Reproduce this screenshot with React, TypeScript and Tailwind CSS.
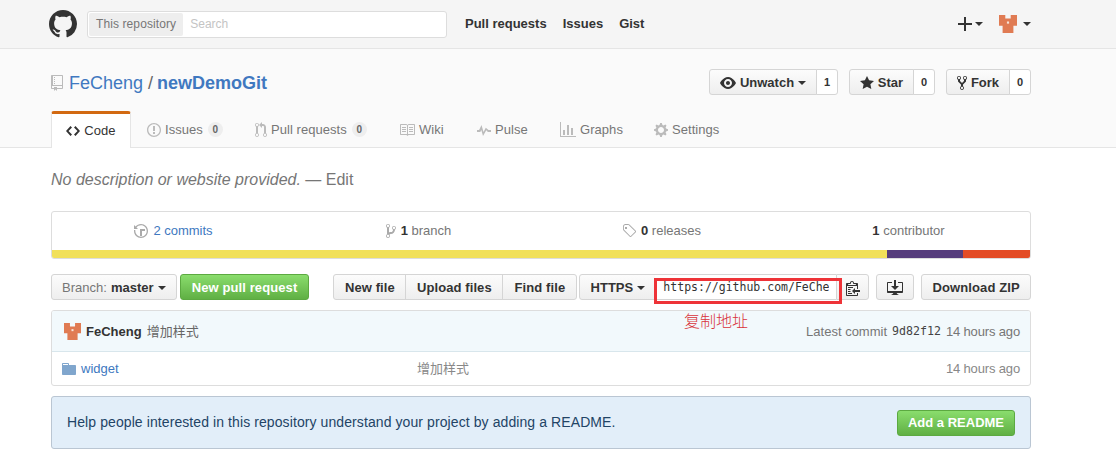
import type { ReactNode } from 'react';

const caret = 'inline-block w-0 h-0 border-x-[4px] border-x-transparent border-t-[4px] border-t-current';
const btn =
  'flex items-center justify-center h-[26px] pt-[1px] border border-[#d5d5d5] bg-gradient-to-b from-[#fcfcfc] to-[#eeeeee] text-[13px] font-bold text-[#333333]';
const green =
  'flex items-center justify-center h-[26px] pt-[1px] rounded-[3px] border border-[#5ca941] bg-gradient-to-b from-[#8add6d] to-[#60b044] text-[13px] font-bold text-white';

const icons = {
  mark: 'M8 0C3.58 0 0 3.58 0 8c0 3.54 2.29 6.53 5.47 7.59.4.07.55-.17.55-.38 0-.19-.01-.82-.01-1.49-2.01.37-2.53-.49-2.69-.94-.09-.23-.48-.94-.82-1.13-.28-.15-.68-.52-.01-.53.63-.01 1.08.58 1.23.82.72 1.21 1.87.87 2.33.66.07-.52.28-.87.51-1.07-1.78-.2-3.64-.89-3.64-3.95 0-.87.31-1.59.82-2.15-.08-.2-.36-1.02.08-2.12 0 0 .67-.21 2.2.82.64-.18 1.32-.27 2-.27.68 0 1.36.09 2 .27 1.53-1.04 2.2-.82 2.2-.82.44 1.1.16 1.92.08 2.12.51.56.82 1.27.82 2.15 0 3.07-1.87 3.75-3.65 3.95.29.25.54.73.54 1.48 0 1.07-.01 1.93-.01 2.2 0 .21.15.46.55.38A8.013 8.013 0 0016 8c0-4.42-3.58-8-8-8z',
  repo: 'M4 9H3V8h1v1zm0-3H3v1h1V6zm0-2H3v1h1V4zm0-2H3v1h1V2zm8-1v12c0 .55-.45 1-1 1H6v2l-1.5-1.5L3 16v-2H1c-.55 0-1-.45-1-1V1c0-.55.45-1 1-1h10c.55 0 1 .45 1 1zm-1 10H1v2h2v-1h3v1h5v-2zm0-10H2v9h9V1z',
  eye: 'M8.06 2C3 2 0 8 0 8s3 6 8.06 6C13 14 16 8 16 8s-3-6-7.94-6zM8 12c-2.2 0-4-1.78-4-4 0-2.2 1.8-4 4-4 2.22 0 4 1.8 4 4 0 2.22-1.78 4-4 4zm2-4c0 1.11-.89 2-2 2-1.11 0-2-.89-2-2 0-1.11.89-2 2-2 1.11 0 2 .89 2 2z',
  star: 'M14 6l-4.9-.64L7 1 4.9 5.36 0 6l3.6 3.26L2.67 14 7 11.67 11.33 14l-.93-4.74L14 6z',
  fork: 'M8 1a1.993 1.993 0 00-1 3.72V6L5 8 3 6V4.72A1.993 1.993 0 002 1a1.993 1.993 0 00-1 3.72V6.5l3 3v1.78A1.993 1.993 0 005 15a1.993 1.993 0 001-3.72V9.5l3-3V4.72A1.993 1.993 0 008 1zM2 4.2C1.34 4.2.8 3.65.8 3c0-.65.55-1.2 1.2-1.2.65 0 1.2.55 1.2 1.2 0 .65-.55 1.2-1.2 1.2zm3 10c-.66 0-1.2-.55-1.2-1.2 0-.65.55-1.2 1.2-1.2.65 0 1.2.55 1.2 1.2 0 .65-.55 1.2-1.2 1.2zm3-10c-.66 0-1.2-.55-1.2-1.2 0-.65.55-1.2 1.2-1.2.65 0 1.2.55 1.2 1.2 0 .65-.55 1.2-1.2 1.2z',
  code: 'M9.5 3L8 4.5 11.5 8 8 11.5 9.5 13 14 8 9.5 3zm-5 0L0 8l4.5 5L6 11.5 2.5 8 6 4.5 4.5 3z',
  issue: 'M7 2.3c3.14 0 5.7 2.56 5.7 5.7s-2.56 5.7-5.7 5.7A5.71 5.71 0 011.3 8c0-3.14 2.56-5.7 5.7-5.7zM7 1C3.14 1 0 4.14 0 8s3.14 7 7 7 7-3.14 7-7-3.14-7-7-7zm1 3H6v5h2V4zm0 6H6v2h2v-2z',
  pull: 'M11 11.28V5c-.03-.78-.34-1.47-.94-2.06C9.46 2.35 8.78 2.03 8 2H7V0L4 3l3 3V4h1c.27.02.48.11.69.31.21.2.3.42.31.69v6.28A1.993 1.993 0 0010 15a1.993 1.993 0 001-3.72zm-1 2.92c-.66 0-1.2-.55-1.2-1.2 0-.65.55-1.2 1.2-1.2.65 0 1.2.55 1.2 1.2 0 .65-.55 1.2-1.2 1.2zM4 3c0-1.11-.89-2-2-2a1.993 1.993 0 00-.99 3.72v6.56A1.993 1.993 0 002 15a1.993 1.993 0 00.99-3.72V4.72c.59-.34 1-.98 1-1.72zm-.8 10c0 .66-.55 1.2-1.2 1.2-.65 0-1.2-.55-1.2-1.2 0-.65.55-1.2 1.2-1.2.65 0 1.2.55 1.2 1.2zM2 4.2C1.34 4.2.8 3.65.8 3c0-.65.55-1.2 1.2-1.2.65 0 1.2.55 1.2 1.2 0 .65-.55 1.2-1.2 1.2z',
  book: 'M3 5h4v1H3V5zm0 3h4V7H3v1zm0 2h4V9H3v1zm11-5h-4v1h4V5zm0 2h-4v1h4V7zm0 2h-4v1h4V9zm2-6v9c0 .55-.45 1-1 1H9.5l-1 1-1-1H2c-.55 0-1-.45-1-1V3c0-.55.45-1 1-1h5.5l1 1 1-1H15c.55 0 1 .45 1 1zm-8 .5L7.5 3H2v9h6V3.5zm7-.5H9.5l-.5.5V12h6V3z',
  pulse: 'M11.5 8L8.8 5.8 6.5 10 4.5 3 2.1 8H0v2h3.3l1-1.9L6 14l3.3-5.7 1.6 1.7H14V8h-2.5z',
  graph: 'M16 14v1H0V0h1v14h15zM5 13H3V8h2v5zm4 0H7V3h2v10zm4 0h-2V6h2v7z',
  gear: 'M14 8.77v-1.6l-1.94-.64-.45-1.09.88-1.84-1.13-1.13-1.81.91-1.09-.45-.69-1.92h-1.6l-.63 1.94-1.11.45-1.84-.88-1.13 1.13.91 1.81-.45 1.09L0 7.23v1.59l1.94.64.45 1.09-.88 1.84 1.13 1.13 1.81-.91 1.09.45.69 1.92h1.59l.63-1.94 1.11-.45 1.84.88 1.13-1.13-.92-1.81.47-1.09L14 8.75v.02zM7 11c-1.66 0-3-1.34-3-3s1.34-3 3-3 3 1.34 3 3-1.34 3-3 3z',
  history: 'M8 13H6V6h5v2H8v5zM7 1C4.81 1 2.87 2.02 1.59 3.59L0 2v4h4L2.5 4.5C3.55 3.17 5.17 2.3 7 2.3c3.14 0 5.7 2.56 5.7 5.7s-2.56 5.7-5.7 5.7A5.71 5.71 0 011.3 8c0-.34.03-.67.09-1H.08C.03 7.33 0 7.66 0 8c0 3.86 3.14 7 7 7s7-3.14 7-7-3.14-7-7-7z',
  branch: 'M10 5c0-1.11-.89-2-2-2a1.993 1.993 0 00-1 3.72v.3c-.02.52-.23.98-.63 1.38-.4.4-.86.61-1.38.63-.83.02-1.48.16-2 .45V4.72a1.993 1.993 0 00-1-3.72C.88 1 0 1.89 0 3a2 2 0 001 1.72v6.56c-.59.35-1 .99-1 1.72 0 1.11.89 2 2 2 1.11 0 2-.89 2-2 0-.53-.2-1-.53-1.36.09-.06.48-.41.59-.47.25-.11.56-.17.94-.17 1.05-.05 1.95-.45 2.75-1.25S8.95 7.77 9 6.73h-.02C9.59 6.37 10 5.73 10 5zM2 1.8c.66 0 1.2.55 1.2 1.2 0 .65-.55 1.2-1.2 1.2C1.35 4.2.8 3.65.8 3c0-.65.55-1.2 1.2-1.2zm0 12.41c-.66 0-1.2-.55-1.2-1.2 0-.65.55-1.2 1.2-1.2.65 0 1.2.55 1.2 1.2 0 .65-.55 1.2-1.2 1.2zm6-8c-.66 0-1.2-.55-1.2-1.2 0-.65.55-1.2 1.2-1.2.65 0 1.2.55 1.2 1.2 0 .65-.55 1.2-1.2 1.2z',
  tag: 'M7.73 1.73C7.26 1.26 6.62 1 5.96 1H3.5C2.13 1 1 2.13 1 3.5v2.47c0 .66.27 1.3.73 1.77l6.06 6.06c.39.39 1.02.39 1.41 0l4.59-4.59a.996.996 0 000-1.41L7.73 1.73zM2.38 7.09c-.31-.3-.47-.7-.47-1.13V3.5c0-.88.72-1.59 1.59-1.59h2.47c.42 0 .83.16 1.13.47l6.14 6.13-4.73 4.73-6.13-6.15zM3 4h2v2H3V4z',
  clippy: 'M2 13h4v1H2v-1zm5-6H2v1h5V7zm2 3V8l-3 3 3 3v-2h5v-2H9zM4.5 9H2v1h2.5V9zM2 12h2.5v-1H2v1zm9 1h1v2c-.02.28-.11.52-.3.7-.19.18-.42.28-.7.3H1c-.55 0-1-.45-1-1V4c0-.55.45-1 1-1h3c0-1.11.89-2 2-2 1.11 0 2 .89 2 2h3c.55 0 1 .45 1 1v5h-1V6H1v9h10v-2zM2 5h8c0-.55-.45-1-1-1H8c-.55 0-1-.45-1-1s-.45-1-1-1-1 .45-1 1-.45 1-1 1H3c-.55 0-1 .45-1 1z',
  download: 'M4 6h3V0h2v6h3l-4 4-4-4zm11-4h-4v1h4v8H1V3h4V2H1c-.55 0-1 .45-1 1v9c0 .55.45 1 1 1h5.34c-.25.61-.86 1.39-2.34 2h8c-1.48-.61-2.09-1.39-2.34-2H15c.55 0 1-.45 1-1V3c0-.55-.45-1-1-1z',
  folder: 'M13 4H7V3c0-.66-.31-1-1-1H1c-.55 0-1 .45-1 1v10c0 .55.45 1 1 1h12c.55 0 1-.45 1-1V5c0-.55-.45-1-1-1zM6 4H1V3h5v1z',
};

function Oct({ d, w = 16, size = 16, className = '' }: { d: string; w?: number; size?: number; className?: string }) {
  return (
    <svg width={(w * size) / 16} height={size} viewBox={`0 0 ${w} 16`} fill="currentColor" className={`shrink-0 ${className}`}>
      <path d={d} />
    </svg>
  );
}

function Identicon({ size }: { size: number }) {
  return (
    <svg width={size} height={size} viewBox="0 0 5 5" className="shrink-0">
      <path d="M0 0h1.75v1h1.5V0H5v3H4v2H1V3H0z" fill="#e07b53" />
      <rect x="2.2" y="1.8" width="0.6" height="0.6" fill="#f7e3d8" />
    </svg>
  );
}

function Social({ widthClass, count, children }: { widthClass: string; count: string; children: ReactNode }) {
  return (
    <div className="flex">
      <div className={`${btn} ${widthClass} rounded-l-[3px] gap-[4px]`}>{children}</div>
      <div className="flex items-center justify-center w-[22px] h-[26px] -ml-px bg-white border border-[#d5d5d5] rounded-r-[3px] text-[11px] font-bold text-[#333333]">
        {count}
      </div>
    </div>
  );
}

function Tab({ icon, label, count, widthClass }: { icon: ReactNode; label: string; count?: string; widthClass: string }) {
  return (
    <div className={`flex items-center gap-[4px] pl-[16px] h-[37px] text-[13px] tracking-[0.05px] text-[#767676] ${widthClass}`}>
      <span className="text-[#bbbbbb]">{icon}</span>
      <span>{label}</span>
      {count && (
        <span className="ml-[1px] flex items-center justify-center w-[15px] h-[15px] rounded-full bg-[#eeeeee] text-[10px] font-bold text-[#666666]">
          {count}
        </span>
      )}
    </div>
  );
}

function Stat({ icon, children, className = '' }: { icon?: ReactNode; children: ReactNode; className?: string }) {
  return (
    <div className={`flex-1 flex items-center justify-center gap-[5px] text-[13px] text-[#767676] ${className}`}>
      {icon && <span className="text-[#aaaaaa]">{icon}</span>}
      <span>{children}</span>
    </div>
  );
}

export default function App() {
  return (
    <div className="relative w-[1116px] h-[451px] overflow-hidden bg-white font-['Liberation_Sans','Noto_Sans_CJK_SC',sans-serif] text-[#333333]">
      {/* header */}
      <header className="h-[49px] bg-[#f5f5f5] border-b border-[#e5e5e5]">
        <div className="flex items-center w-[985px] h-[48px] ml-[49px]">
          <Oct d={icons.mark} size={28} className="text-[#333333]" />
          <div className="flex items-center ml-[10px] w-[360px] h-[27px] bg-white border border-[#dddddd] rounded-[3px] text-[12px]">
            <span className="flex items-center h-[23px] ml-[1px] px-[7px] bg-[#eeeeee] text-[#767676] rounded-[2px] tracking-[0.1px]">This repository</span>
            <span className="ml-[7px] text-[#c4c4c4]">Search</span>
          </div>
          <nav className="flex gap-[16px] ml-[18px] text-[13px] font-bold text-[#333333]">
            <span>Pull requests</span>
            <span>Issues</span>
            <span>Gist</span>
          </nav>
          <div className="flex items-center ml-auto mr-[3px]">
            <svg width="14" height="14" viewBox="0 0 14 14" fill="#333333" className="shrink-0">
              <path d="M6 0h2v6h6v2H8v6H6V8H0V6h6z" />
            </svg>
            <span className={`${caret} text-[#333333] ml-[3px]`} />
            <span className="ml-[16px] flex">
              <Identicon size={18} />
            </span>
            <span className={`${caret} text-[#333333] ml-[6px]`} />
          </div>
        </div>
      </header>

      {/* repo head */}
      <div className="h-[99px] bg-[#fafafa] border-b border-[#e5e5e5]">
        <div className="w-[980px] ml-[51px]">
          <div className="flex items-start justify-between pt-[20px] h-[62px]">
            <h1 className="flex items-center h-[26px] pt-[1px] text-[18px] leading-[26px] text-[#4078c0]">
              <Oct d={icons.repo} w={12} className="text-[#bbbbbb] mr-[6px]" />
              <span>FeCheng</span>
              <span className="ml-[5px] mr-[4px] text-[#666666]">/</span>
              <strong className="font-bold">newDemoGit</strong>
            </h1>
            <div className="flex gap-[11px]">
              <Social widthClass="w-[108px]" count="1">
                <Oct d={icons.eye} />
                <span>Unwatch</span>
                <span className={caret} />
              </Social>
              <Social widthClass="w-[65px]" count="0">
                <Oct d={icons.star} w={14} />
                <span>Star</span>
              </Social>
              <Social widthClass="w-[64px]" count="0">
                <Oct d={icons.fork} w={10} />
                <span>Fork</span>
              </Social>
            </div>
          </div>
          <div className="flex">
            <div className="flex items-center justify-center gap-[4px] w-[80px] h-[37px] bg-white border-x border-[#e5e5e5] border-t-[3px] border-t-[#d26911] rounded-t-[3px] text-[13px] tracking-[0.05px] text-[#333333]">
              <Oct d={icons.code} w={14} />
              <span>Code</span>
            </div>
            <Tab icon={<Oct d={icons.issue} w={14} />} label="Issues" count="0" widthClass="w-[108px]" />
            <Tab icon={<Oct d={icons.pull} w={12} />} label="Pull requests" count="0" widthClass="w-[144px]" />
            <Tab icon={<Oct d={icons.book} />} label="Wiki" widthClass="w-[78px]" />
            <Tab icon={<Oct d={icons.pulse} w={14} />} label="Pulse" widthClass="w-[83px]" />
            <Tab icon={<Oct d={icons.graph} />} label="Graphs" widthClass="w-[94px]" />
            <Tab icon={<Oct d={icons.gear} w={14} />} label="Settings" widthClass="w-[120px]" />
          </div>
        </div>
      </div>

      {/* content */}
      <main className="w-[980px] ml-[51px]">
        <p className="h-[63px] pt-[21px] text-[16px] leading-[22px] text-[#767676]">
          <em>No description or website provided.</em> — Edit
        </p>

        <div className="h-[48px] border border-[#dddddd] rounded-[3px] overflow-hidden">
          <div className="flex h-[38px]">
            <Stat icon={<Oct d={icons.history} w={14} />}>
              <span className="text-[#4078c0]">2 commits</span>
            </Stat>
            <Stat icon={<Oct d={icons.branch} w={10} />} className="pl-[2px]">
              <b className="text-[#333333]">1</b> branch
            </Stat>
            <Stat icon={<Oct d={icons.tag} w={14} />} className="pr-[4px]">
              <b className="text-[#333333]">0</b> releases
            </Stat>
            <Stat>
              <b className="text-[#333333]">1</b> contributor
            </Stat>
          </div>
          <div className="flex h-[8px]">
            <div className="w-[835px] bg-[#f1e05a]" />
            <div className="w-[76px] bg-[#563d7c]" />
            <div className="flex-1 bg-[#e34c26]" />
          </div>
        </div>

        <div className="flex mt-[15px] h-[26px]">
          <div className={`${btn} w-[126px] rounded-[3px] gap-[4px]`}>
            <span className="text-[#767676] font-normal">Branch:</span>
            <b>master</b>
            <span className={caret} />
          </div>
          <div className={`${green} w-[130px] ml-[3px] tracking-[0.1px]`}>New pull request</div>
          <div className="flex ml-[24px] tracking-[0.1px]">
            <div className={`${btn} w-[73px] rounded-l-[3px]`}>New file</div>
            <div className={`${btn} w-[98px] -ml-px`}>Upload files</div>
            <div className={`${btn} w-[75px] -ml-px rounded-r-[3px]`}>Find file</div>
          </div>
          <div className="flex ml-[2px]">
            <div className={`${btn} w-[77px] rounded-l-[3px] gap-[4px]`}>
              <span>HTTPS</span>
              <span className={caret} />
            </div>
            <div className="flex items-center w-[181px] h-[26px] -ml-px pl-[8px] pt-[2px] bg-white border-y border-[#d5d5d5] font-['DejaVu_Sans_Mono',monospace] text-[11.5px] whitespace-nowrap text-[#333333]">
              <span className="block w-[166px] overflow-hidden">https://github.com/FeChe</span>
            </div>
            <div className={`${btn} w-[33px] rounded-r-[3px]`}>
              <Oct d={icons.clippy} w={14} />
            </div>
          </div>
          <div className={`${btn} w-[38px] ml-[7px] rounded-[3px]`}>
            <Oct d={icons.download} />
          </div>
          <div className={`${btn} w-[110px] ml-[7px] rounded-[3px] tracking-[0.1px]`}>Download ZIP</div>
        </div>

        <div className="mt-[10px] h-[76px] border border-[#dddddd] rounded-[3px] overflow-hidden">
          <div className="flex items-center h-[41px] pt-[1px] pl-[12px] pr-[10px] bg-[#f2f9fc] border-b border-[#d8e6ec] text-[13px]">
            <Identicon size={17} />
            <b className="ml-[5px] text-[#333333]">FeCheng</b>
            <span className="ml-[5px] text-[#666666]">增加样式</span>
            <span className="ml-auto text-[#767676]">Latest commit</span>
            <span className="ml-[5px] font-['DejaVu_Sans_Mono',monospace] text-[11.6px] text-[#444444]">9d82f12</span>
            <span className="ml-[5px] tracking-[-0.15px] text-[#767676]">14 hours ago</span>
          </div>
          <div className="flex items-center h-[33px] pl-[10px] pr-[10px] text-[13px]">
            <Oct d={icons.folder} w={14} className="text-[#80a6cd]" />
            <span className="ml-[5px] w-[336px] text-[#4078c0]">widget</span>
            <span className="text-[#888888]">增加样式</span>
            <span className="ml-auto tracking-[-0.15px] text-[#888888]">14 hours ago</span>
          </div>
        </div>

        <div className="flex items-center justify-between mt-[10px] h-[53px] pl-[15px] pr-[15px] bg-[#e2eef9] border border-[#bac6d3] rounded-[3px] text-[14px] text-[#246]">
          <span className="tracking-[0.09px]">Help people interested in this repository understand your project by adding a README.</span>
          <div className={`${green} w-[118px]`}>Add a README</div>
        </div>
      </main>

      {/* annotation drawn over the page */}
      <div className="absolute left-[654px] top-[278px] w-[188px] h-[26px] border-[3px] border-[#ee3338]" />
      <div className="absolute left-[684px] top-[309px] text-[16px] leading-[22px] font-light text-[#d8323a] font-['Noto_Sans_CJK_SC',sans-serif]">复制地址</div>
    </div>
  );
}
